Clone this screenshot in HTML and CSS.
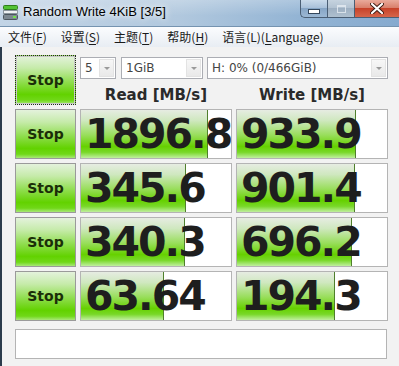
FILE: index.html
```html
<!DOCTYPE html>
<html lang="zh-CN">
<head>
    <meta charset="UTF-8">
    <meta name="viewport" content="width=device-width, initial-scale=1.0">
    <title>Random Write 4KiB [3/5]</title>
    <link rel="stylesheet" href="styles.css">
</head>
<body>
<div class="window">
    <div class="titlebar">
        <svg class="app-icon" width="15" height="15" viewBox="0 0 15 15">
            <rect x="0.5" y="0.5" width="14" height="4" rx="1" fill="#52c234" stroke="#2f7d1c"/>
            <rect x="0.5" y="5.5" width="14" height="3" fill="#eef1f3" stroke="#8a949c"/>
            <rect x="0.5" y="9.5" width="14" height="5" rx="1" fill="#7d8891" stroke="#4c565e"/>
            <rect x="10" y="11" width="3" height="2" fill="#72e04c"/>
        </svg>
        <span class="title">Random Write 4KiB [3/5]</span>
        <div class="caption-buttons">
            <div class="cap-btn cap-min"><span class="dash"></span></div>
            <div class="cap-btn cap-max"><span class="box"></span></div>
            <div class="cap-btn cap-close">
                <svg width="14" height="11" viewBox="0 0 14 11">
                    <path d="M2 1 L12 10 M12 1 L2 10" stroke="#3b1a12" stroke-width="4" stroke-linecap="round"/>
                    <path d="M2 1 L12 10 M12 1 L2 10" stroke="#fff" stroke-width="2.2" stroke-linecap="round"/>
                </svg>
            </div>
        </div>
    </div>

    <div class="menubar">
        <span class="menu-item">文件(<u>F</u>)</span>
        <span class="menu-item">设置(<u>S</u>)</span>
        <span class="menu-item">主题(<u>T</u>)</span>
        <span class="menu-item">帮助(<u>H</u>)</span>
        <span class="menu-item">语言(L)(<u>L</u>anguage)</span>
    </div>

    <div class="main">
        <div class="grid">
            <div class="stop-btn focused">Stop</div>
            <div class="controls">
                <div class="combos">
                    <div class="combo combo-count"><span class="combo-text">5</span><span class="arrow"></span></div>
                    <div class="combo combo-size"><span class="combo-text">1GiB</span><span class="arrow"></span></div>
                    <div class="combo combo-drive"><span class="combo-text">H: 0% (0/466GiB)</span><span class="arrow"></span></div>
                </div>
                <div class="heads">
                    <div class="head">Read [MB/s]</div>
                    <div class="head">Write [MB/s]</div>
                </div>
            </div>

            <div class="stop-btn">Stop</div>
            <div class="result"><div class="fill" style="width: 127px"></div><span class="value">1896.8</span></div>
            <div class="result"><div class="fill" style="width: 119px"></div><span class="value">933.9</span></div>

            <div class="stop-btn">Stop</div>
            <div class="result"><div class="fill" style="width: 105px"></div><span class="value">345.6</span></div>
            <div class="result"><div class="fill" style="width: 118px"></div><span class="value">901.4</span></div>

            <div class="stop-btn">Stop</div>
            <div class="result"><div class="fill" style="width: 104px"></div><span class="value">340.3</span></div>
            <div class="result"><div class="fill" style="width: 115px"></div><span class="value">696.2</span></div>

            <div class="stop-btn">Stop</div>
            <div class="result"><div class="fill" style="width: 83px"></div><span class="value">63.64</span></div>
            <div class="result"><div class="fill" style="width: 98px"></div><span class="value">194.3</span></div>
        </div>
        <div class="comment"></div>
    </div>
</div>
</body>
</html>
```

FILE: styles.css
```css
body {margin: 0; background: #f2f2f2; font-family: "Noto Sans", "Noto Sans CJK SC", sans-serif;}

.window {width: 399px; height: 366px; overflow: hidden; background: #f2f2f2;}

/* title bar */
.titlebar {height: 26px; display: flex; align-items: flex-start; border-bottom: 1px solid #7593b0;
    background: linear-gradient(to bottom, rgba(255,255,255,0.25), rgba(255,255,255,0) 60%),
                linear-gradient(to right, #c2d4e6 0%, #b1c8de 45%, #93b4d4 75%, #86aacf 100%);}
.app-icon {margin: 5px 0 0 3px; flex: none;}
.title {margin: 4px 0 0 5px; font-family: "Liberation Sans", sans-serif; font-size: 13px; color: #000;
    text-shadow: 0 0 6px #fff, 0 0 10px rgba(255,255,255,0.9);}
.caption-buttons {margin-left: auto; display: flex; height: 19px;}
.cap-btn {height: 18px; border: 1px solid #4a5e74; border-top: none; display: flex; align-items: center; justify-content: center; box-sizing: border-box;}
.cap-min {width: 27px; border-radius: 0 0 0 5px; border-right: none;
    background: linear-gradient(to bottom, #c9daea 0%, #a9c1da 45%, #86a5c5 50%, #9cb8d4 100%);}
.cap-max {width: 27px; border-right: none;
    background: linear-gradient(to bottom, #c6d3df 0%, #b3c3d2 45%, #9eb0c2 50%, #afc0cf 100%);}
.cap-close {width: 45px; border-right: none;
    background: linear-gradient(to bottom, #e9aa9b 0%, #d9806c 45%, #c7432a 50%, #d6654a 100%);}
.dash {width: 10px; height: 3px; margin-top: 6px; background: #fff; border: 1px solid #34475c;}
.box {width: 7px; height: 5px; border: 1px solid #e6ecf2; border-top-width: 2px; opacity: 0.8;}

/* menu */
.menubar {height: 20px; display: flex; align-items: center; padding-left: 2px;
    background: linear-gradient(to bottom, #fbfcfe, #e8edf3);
    font-family: "Noto Sans CJK SC", sans-serif; font-size: 12px; color: #1b1b1b;}
.menu-item {padding: 0 6px; margin-right: 2px; line-height: 20px;}
.menu-item u {text-underline-offset: 2px;}

/* main area */
.main {border-left: 2px solid #2c3b4c; padding: 8px 0 0 13px; height: 319px; box-sizing: border-box;}
.grid {display: grid; grid-template-columns: 61px 152px 152px; grid-auto-rows: 50px; gap: 4px;}

.stop-btn {border: 1px solid #9a9a9a; display: flex; align-items: center; justify-content: center;
    font-family: "DejaVu Sans", sans-serif; font-weight: bold; font-size: 14px; color: #1b2e08;
    background: linear-gradient(to bottom, #e4f2dc 0%, #c6ebaa 25%, #8edd4c 55%, #62d200 80%, #70d818 92%, #a8e878 100%);}
.stop-btn.focused {border: 1px dotted #222; box-shadow: inset 0 0 0 1px #c8c8c8;}

.controls {grid-column: 2 / 4;}
.combos {display: flex; margin-top: 2px; height: 22px;}
.combo {border: 1px solid #abadb3; background: #fff; display: flex; align-items: center; box-sizing: border-box;
    font-family: "DejaVu Sans", sans-serif; font-size: 12px; color: #444;}
.combo-count {width: 36px;}
.combo-size {width: 82px; margin-left: 5px;}
.combo-drive {width: 181px; margin-left: 4px;}
.combo-text {flex: 1; padding-left: 4px; white-space: nowrap;}
.arrow {width: 15px; height: 18px; margin-right: 1px; border: 1px solid #e3e3e3; box-sizing: border-box; position: relative;
    background: linear-gradient(to bottom, #f7f7f7, #e9e9e9);}
.arrow::after {content: ""; position: absolute; left: 4px; top: 7px; border-left: 3px solid transparent; border-right: 3px solid transparent; border-top: 3px solid #9a9a9a;}

.heads {display: grid; grid-template-columns: 152px 152px; gap: 4px; margin-top: 7px;}
.head {text-align: center; font-family: "DejaVu Sans", sans-serif; font-weight: bold; font-size: 15px; line-height: 18px; color: #2a2a2a;}

.result {position: relative; border: 1px solid #b4b4b4; background: #fff; overflow: hidden; display: flex; align-items: center;}
.fill {position: absolute; left: 0; top: 0; bottom: 0; border-right: 1px solid #4f7f2c; box-sizing: border-box;
    background: linear-gradient(to bottom, #e6ece2 0%, #cfe8bf 22%, #99de5c 52%, #66d100 76%, #78d828 88%, #c0efa0 100%);}
.value {position: relative; padding-left: 4px; font-family: "DejaVu Sans", sans-serif; font-weight: bold; font-size: 41px;
    letter-spacing: -2px; color: #1e1e1e; white-space: nowrap;}

.comment {width: 372px; height: 30px; margin-top: 8px; border: 1px solid #b4b4b4; background: #fff; box-sizing: border-box;}
```
